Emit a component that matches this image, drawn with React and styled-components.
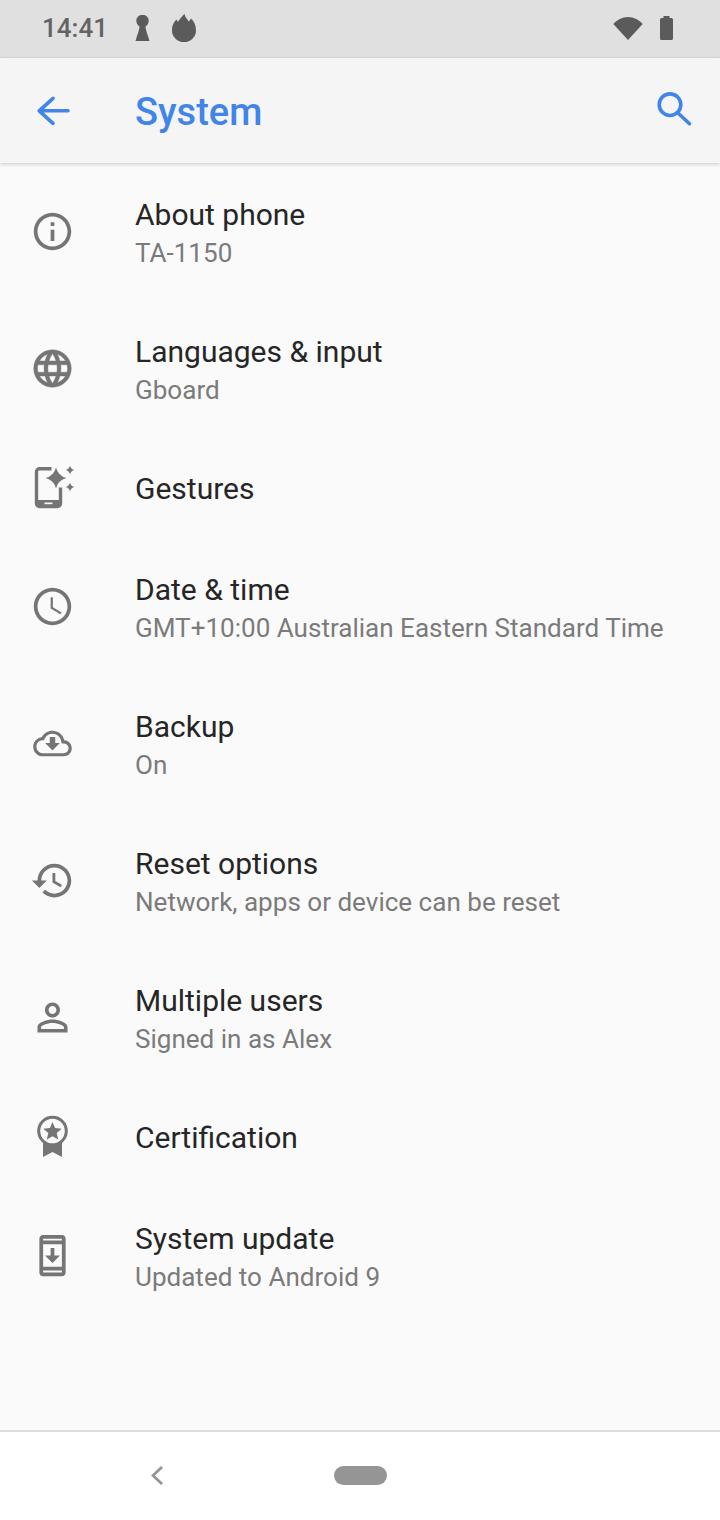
import React from "react";
import styled, { createGlobalStyle } from "styled-components";

const GlobalStyle = createGlobalStyle`
  html, body {
    margin: 0;
    padding: 0;
    background: #fafafa;
  }
`;

const Screen = styled.div`
  width: 720px;
  height: 1520px;
  display: flex;
  flex-direction: column;
  overflow: hidden;
  background: #fafafa;
  font-family: Roboto, "Liberation Sans", sans-serif;
`;

const StatusBar = styled.div`
  height: 58px;
  flex: none;
  display: flex;
  align-items: center;
  padding: 0 47px 2px 42px;
  box-sizing: border-box;
  background: #e0e0e0;
  color: #636363;
`;

const Clock = styled.span`
  font-size: 26px;
  font-weight: 500;
  margin-right: 27px;
`;

const StatusIcon = styled.svg`
  display: block;
  flex: none;
  fill: #5b5b5b;
  margin-left: ${(p) => p.$gap || 0}px;
`;

const Spacer = styled.div`
  flex: 1;
`;

const AppBar = styled.header`
  position: relative;
  z-index: 1;
  height: 105px;
  flex: none;
  display: flex;
  align-items: center;
  padding: 0 23px 0 30px;
  box-sizing: border-box;
  background: #f5f5f5;
  box-shadow: 0 1px 4px rgba(0, 0, 0, 0.2);
`;

const BarIcon = styled.svg`
  display: block;
  flex: none;
  width: 45px;
  height: 45px;
  fill: none;
  stroke: #4285e8;
  stroke-width: 3.6;
  stroke-linecap: round;
  stroke-linejoin: round;
`;

const Title = styled.h1`
  margin: 0 0 0 60px;
  padding-top: 2px;
  flex: 1;
  font-size: 38px;
  font-weight: 500;
  color: #4285e8;
`;

const List = styled.main`
  flex: 1;
`;

const Row = styled.div`
  height: ${(p) => (p.$single ? 101 : 137)}px;
  display: flex;
  align-items: center;
  padding-left: 30px;
`;

const RowIcon = styled.svg`
  display: block;
  flex: none;
  width: 45px;
  height: 45px;
  fill: #757575;
`;

const RowText = styled.div`
  margin-left: 60px;
  padding-top: ${(p) => (p.$single ? 3 : 4)}px;
`;

const RowTitle = styled.div`
  font-size: 30px;
  line-height: 38px;
  color: #262626;
`;

const RowSub = styled.div`
  font-size: 26.05px;
  line-height: 38px;
  color: #7b7b7b;
`;

const NavBar = styled.footer`
  height: 90px;
  flex: none;
  display: flex;
  align-items: center;
  gap: 171px;
  padding: 0 0 2px 151px;
  box-sizing: border-box;
  border-top: 2px solid #dddddd;
  background: #ffffff;
`;

const NavBack = styled.svg`
  display: block;
  width: 12px;
  height: 19px;
  fill: none;
  stroke: #959595;
  stroke-width: 2.8;
`;

const HomePill = styled.div`
  width: 53px;
  height: 19px;
  border-radius: 10px;
  background: #959595;
`;

const Sparkle = ({ x, y, r }) => (
  <path
    d={`M${x} ${y - r}Q${x + r * 0.2} ${y - r * 0.2} ${x + r} ${y}Q${x + r * 0.2} ${y + r * 0.2} ${x} ${y + r}Q${x - r * 0.2} ${y + r * 0.2} ${x - r} ${y}Q${x - r * 0.2} ${y - r * 0.2} ${x} ${y - r}Z`}
  />
);

const icons = {
  info: (
    <RowIcon viewBox="0 0 24 24">
      <path d="M11 7h2v2h-2zm0 4h2v6h-2zm1-9C6.48 2 2 6.48 2 12s4.48 10 10 10 10-4.48 10-10S17.52 2 12 2zm0 18c-4.41 0-8-3.59-8-8s3.59-8 8-8 8 3.59 8 8-3.59 8-8 8z" />
    </RowIcon>
  ),
  language: (
    <RowIcon viewBox="0 0 24 24" stroke="#757575" strokeWidth="0.25">
      <path d="M11.99 2C6.47 2 2 6.48 2 12s4.47 10 9.99 10C17.52 22 22 17.52 22 12S17.52 2 11.99 2zm6.93 6h-2.95c-.32-1.25-.78-2.45-1.38-3.56 1.84.63 3.37 1.91 4.33 3.56zM12 4.04c.83 1.2 1.48 2.53 1.91 3.96h-3.82c.43-1.43 1.08-2.76 1.91-3.96zM4.26 14C4.1 13.36 4 12.69 4 12s.1-1.36.26-2h3.38c-.08.66-.14 1.32-.14 2 0 .68.06 1.34.14 2H4.26zm.82 2h2.95c.32 1.25.78 2.45 1.38 3.56-1.84-.63-3.37-1.9-4.33-3.56zm2.95-8H5.08c.96-1.66 2.49-2.93 4.33-3.56C8.81 5.55 8.35 6.75 8.03 8zM12 19.96c-.83-1.2-1.48-2.53-1.91-3.96h3.82c-.43 1.43-1.08 2.76-1.91 3.96zM14.34 14H9.66c-.09-.66-.16-1.32-.16-2 0-.68.07-1.35.16-2h4.68c.09.65.16 1.32.16 2 0 .68-.07 1.34-.16 2zm.25 5.56c.6-1.11 1.06-2.31 1.38-3.56h2.95c-.96 1.65-2.49 2.93-4.33 3.56zM16.36 14c.08-.66.14-1.32.14-2 0-.68-.06-1.34-.14-2h3.38c.16.64.26 1.31.26 2s-.1 1.36-.26 2h-3.38z" />
    </RowIcon>
  ),
  gestures: (
    <RowIcon viewBox="-1.5 -1.5 45 45">
      <path
        d="M20 2.2H8a3 3 0 0 0-3 3V37a3 3 0 0 0 3 3h18a3 3 0 0 0 3-3V21"
        fill="none"
        stroke="#757575"
        strokeWidth="3.4"
      />
      <path fillRule="evenodd" d="M5 33.5h24v6H5zM13 36v1.8h8V36z" />
      <Sparkle x={24.5} y={11.5} r={10.5} />
      <Sparkle x={38.5} y={3.5} r={4.5} />
      <Sparkle x={38.5} y={20.5} r={4.5} />
    </RowIcon>
  ),
  clock: (
    <RowIcon viewBox="0 0 24 24">
      <path d="M11.99 2C6.47 2 2 6.48 2 12s4.47 10 9.99 10C17.52 22 22 17.52 22 12S17.52 2 11.99 2zM12 20c-4.42 0-8-3.58-8-8s3.58-8 8-8 8 3.58 8 8-3.58 8-8 8z" />
      <path d="M12.2 7H11v6l5.25 3.15.6-1-4.650-2.750z" />
    </RowIcon>
  ),
  cloud: (
    <RowIcon viewBox="-2 -2 28 28">
      <path d="M19.35 10.04C18.67 6.59 15.64 4 12 4 9.11 4 6.6 5.64 5.35 8.04 2.34 8.36 0 10.91 0 14c0 3.31 2.69 6 6 6h13c2.76 0 5-2.24 5-5 0-2.64-2.05-4.78-4.65-4.96zM19 18H6c-2.21 0-4-1.79-4-4 0-2.05 1.53-3.76 3.56-3.97l1.07-.11.5-.95C8.08 7.14 9.94 6 12 6c2.62 0 4.88 1.86 5.39 4.43l.3 1.5 1.53.11c1.56.1 2.78 1.41 2.78 2.96 0 1.65-1.35 3-3 3z" />
      <path d="M13.700 8h-3.400v3.700H7.400l4.600 4.600 4.600-4.600h-2.900z" />
    </RowIcon>
  ),
  history: (
    <RowIcon viewBox="0 0 24 24">
      <path d="M13 3c-4.97 0-9 4.03-9 9H1l3.89 3.89.07.14L9 12H6c0-3.87 3.13-7 7-7s7 3.13 7 7-3.13 7-7 7c-1.93 0-3.68-.79-4.94-2.06l-1.42 1.42C8.27 19.99 10.51 21 13 21c4.97 0 9-4.03 9-9s-4.03-9-9-9zm-1 5v5l4.28 2.54.72-1.21-3.5-2.08V8H12z" />
    </RowIcon>
  ),
  person: (
    <RowIcon viewBox="0 0 24 24">
      <path d="M12 5.9c1.16 0 2.1.94 2.1 2.1s-.94 2.1-2.1 2.1S9.9 9.16 9.9 8s.94-2.1 2.1-2.1m0 9c2.97 0 6.1 1.46 6.1 2.1v1.1H5.9V17c0-.64 3.13-2.1 6.1-2.1M12 4C9.79 4 8 5.79 8 8s1.79 4 4 4 4-1.79 4-4-1.79-4-4-4zm0 9c-2.67 0-8 1.34-8 4v3h16v-3c0-2.66-5.33-4-8-4z" />
    </RowIcon>
  ),
  badge: (
    <RowIcon viewBox="-1.500 -1.500 45 45">
      <path d="M11.500 24V41.500L21 36.500l9.500 5V24z" />
      <circle cx="21" cy="15.500" r="13.800" fill="#fafafa" stroke="#757575" strokeWidth="3" />
      <path d="M21 6.500l2.600 6.100 6.600.6-5 4.400 1.500 6.500-5.700-3.400-5.700 3.400 1.500-6.500-5-4.400 6.600-.6z" />
    </RowIcon>
  ),
  update: (
    <RowIcon viewBox="0 0 24 24">
      <path d="M17 1.010 7 1c-1.100 0-2 .9-2 2v18c0 1.100.9 2 2 2h10c1.100 0 2-.9 2-2V3c0-1.100-.9-1.990-2-1.990zM17 21H7v-1h10v1zm0-3H7V6h10v12zm0-14H7V3h10v1zM16 12h-3V8h-2v4H8l4 4 4-4z" />
    </RowIcon>
  ),
};

const rows = [
  { icon: "info", title: "About phone", sub: "TA-1150" },
  { icon: "language", title: "Languages & input", sub: "Gboard" },
  { icon: "gestures", title: "Gestures" },
  { icon: "clock", title: "Date & time", sub: "GMT+10:00 Australian Eastern Standard Time" },
  { icon: "cloud", title: "Backup", sub: "On" },
  { icon: "history", title: "Reset options", sub: "Network, apps or device can be reset" },
  { icon: "person", title: "Multiple users", sub: "Signed in as Alex" },
  { icon: "badge", title: "Certification" },
  { icon: "update", title: "System update", sub: "Updated to Android 9" },
];

export default function App() {
  return (
    <Screen>
      <GlobalStyle />
      <StatusBar>
        <Clock>14:41</Clock>
        <StatusIcon width="15" height="26" viewBox="0 0 15 26">
          <circle cx="7.500" cy="6" r="6.200" />
          <path d="M4.800 9C4.800 15 2 20 .5 26h14C13 20 10.200 15 10.200 9z" />
        </StatusIcon>
        <StatusIcon $gap={22} width="24" height="28" viewBox="0 0 24 28">
          <path d="M0 16.500C0 11 2 8 4.500 5.500L6 8C7.500 5 10 2 12.500 0 13 3 15 5 17 7.500L19 4.500C22 7 24 11 24 16.500A12 11.500 0 0 1 0 16.500Z" />
        </StatusIcon>
        <Spacer />
        <StatusIcon width="30" height="23" viewBox="0 0 30 23">
          <path d="M15 23 .3 7C4 3 9 0 15 0s11 3 14.700 7z" />
        </StatusIcon>
        <StatusIcon $gap={17} width="13" height="24" viewBox="0 0 13 24">
          <path d="M3.500 0h6v2h2a1.500 1.500 0 0 1 1.500 1.500v19a1.500 1.500 0 0 1-1.500 1.500h-10A1.500 1.500 0 0 1 0 22.500v-19A1.500 1.500 0 0 1 1.500 2h2z" />
        </StatusIcon>
      </StatusBar>
      <AppBar>
        <BarIcon viewBox="0 0 45 45">
          <path d="M38 22.800H9.200M23 10.300 9.200 22.800 23 35.400" />
        </BarIcon>
        <Title>System</Title>
        <BarIcon viewBox="0 0 45 45">
          <circle cx="18" cy="16.700" r="10.800" />
          <path d="M26 25 37.500 35.700" />
        </BarIcon>
      </AppBar>
      <List>
        {rows.map((row) => (
          <Row key={row.title} $single={!row.sub}>
            {icons[row.icon]}
            <RowText $single={!row.sub}>
              <RowTitle>{row.title}</RowTitle>
              {row.sub && <RowSub>{row.sub}</RowSub>}
            </RowText>
          </Row>
        ))}
      </List>
      <NavBar>
        <NavBack viewBox="0 0 12 19">
          <path d="M11 1 2 9.500 11 18" />
        </NavBack>
        <HomePill />
      </NavBar>
    </Screen>
  );
}
